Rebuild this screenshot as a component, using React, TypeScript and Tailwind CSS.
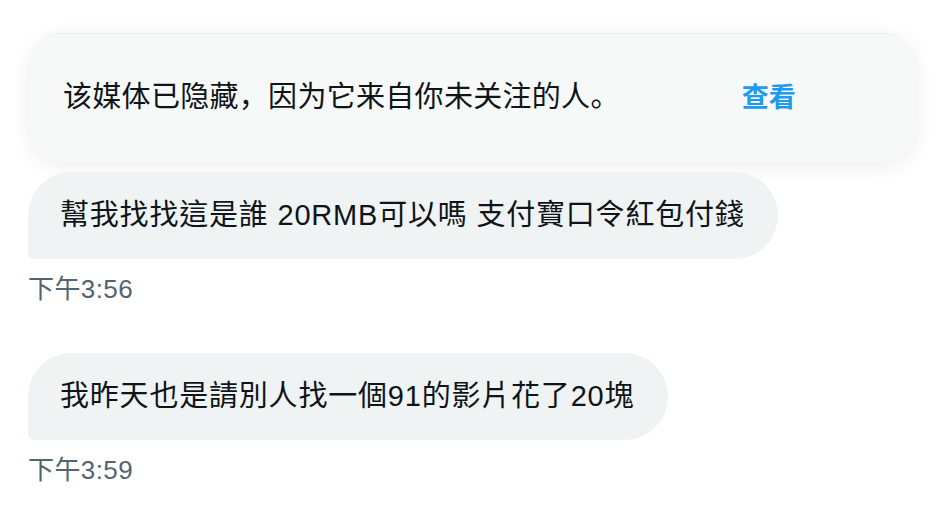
const cjk = { fontFamily: '"Liberation Sans", "Noto Sans CJK SC", sans-serif' };
const cjkTC = { fontFamily: '"Liberation Sans", "Noto Sans CJK TC", sans-serif' };

interface MessageProps {
  text: string;
  time: string;
  width: string;
}

const Message = ({ text, time, width }: MessageProps) => {
  return (
    <div className="flex flex-col items-start">
      <div
        className={`${width} h-[87px] bg-[#eff3f4] rounded-t-[44px] rounded-br-[44px] rounded-bl-[6px] flex items-center pl-[32px] text-[#0f1419] text-[29px] tracking-[0.8px]`}
        style={cjkTC}
      >
        {text}
      </div>
      <div className="mt-[12px] text-[#536471] text-[26px] tracking-[0.4px] leading-[36px]" style={cjkTC}>
        {time}
      </div>
    </div>
  );
};

export default function App() {
  return (
    <div className="w-[940px] h-[506px] bg-white overflow-hidden pl-[28px] pt-[33px]">
      <div
        className="ml-[2px] w-[885px] h-[129px] bg-[#f7f9f9] rounded-[32px] border-t border-[#eceef0] shadow-[0_4px_22px_rgba(0,0,0,0.07)] flex items-center pl-[33px]"
        style={cjk}
      >
        <span className="text-[#0f1419] text-[29px] tracking-[0.3px]">该媒体已隐藏，因为它来自你未关注的人。</span>
        <button className="ml-[122px] text-[#1d9bf0] text-[27px] font-bold">查看</button>
      </div>
      <div className="mt-[10px] flex flex-col gap-[46px]">
        <Message text="幫我找找這是誰 20RMB可以嗎 支付寶口令紅包付錢" time="下午3:56" width="w-[750px]" />
        <Message text="我昨天也是請別人找一個91的影片花了20塊" time="下午3:59" width="w-[640px]" />
      </div>
    </div>
  );
}
